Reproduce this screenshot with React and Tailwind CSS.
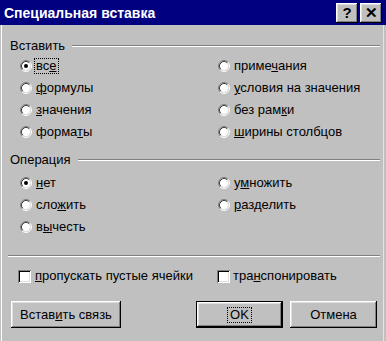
import React from "react";

const btn3d =
  "bg-[#c0c0c0] shadow-[inset_-1px_-1px_0_#000,inset_1px_1px_0_#fff,inset_-2px_-2px_0_#808080,inset_2px_2px_0_#dfdfdf]";

function Radio({ checked }) {
  return (
    <svg width="12" height="12" viewBox="0 0 12 12" className="shrink-0">
      <circle cx="6" cy="6" r="4.2" fill="#fff" />
      <path d="M2.11 9.89 A5.5 5.5 0 0 1 9.89 2.11" fill="none" stroke="#808080" />
      <path d="M9.89 2.11 A5.5 5.5 0 0 1 2.11 9.89" fill="none" stroke="#fff" />
      <path d="M2.82 9.18 A4.5 4.5 0 0 1 9.18 2.82" fill="none" stroke="#404040" />
      <path d="M9.18 2.82 A4.5 4.5 0 0 1 2.82 9.18" fill="none" stroke="#dfdfdf" />
      {checked && <circle cx="6" cy="6" r="2" fill="#000" />}
    </svg>
  );
}

function Check() {
  return (
    <span className="block w-[13px] h-[13px] shrink-0 bg-white shadow-[inset_1px_1px_0_#808080,inset_-1px_-1px_0_#fff,inset_2px_2px_0_#000,inset_-2px_-2px_0_#dfdfdf]" />
  );
}

function Opt({ checked, focus, children }) {
  return (
    <div className="flex h-[22px] items-center gap-[2px]">
      <Radio checked={checked} />
      <span
        className={
          focus
            ? "border border-dotted border-black px-px leading-[14px]"
            : "border border-transparent px-px leading-[14px]"
        }
      >
        {children}
      </span>
    </div>
  );
}

function Group({ title }) {
  return (
    <div className="flex items-center gap-[7px] pl-[8px] pr-[3px] h-[14px]">
      <span className="leading-[14px]">{title}</span>
      <div className="flex-1 border-t border-t-[#808080] border-b border-b-white" />
    </div>
  );
}

export default function App() {
  return (
    <div
      className="w-[386px] h-[341px] bg-[#c0c0c0] flex flex-col overflow-hidden text-[13px] text-black"
      style={{ fontFamily: '"Liberation Sans", Arial, sans-serif' }}
    >
      {/* title bar */}
      <div className="h-[25px] bg-[#000080] flex items-center justify-between pl-[4px] pr-[4px] shrink-0">
        <span className="text-white font-bold text-[14px] leading-none">
          Специальная вставка
        </span>
        <div className="flex gap-[2px]">
          <div className={`${btn3d} w-[22px] h-[20px] flex items-center justify-center font-bold text-[15px] leading-none`}>
            ?
          </div>
          <div className={`${btn3d} w-[22px] h-[20px] flex items-center justify-center font-bold text-[15px] leading-none`}>
            ✕
          </div>
        </div>
      </div>

      <div className="flex-1 flex flex-col border-l border-l-white border-r border-r-[#e4e4e4] ml-px mr-[2px] pt-[14px]">
        <Group title="Вставить" />
        <div className="grid grid-cols-[198px_1fr] pl-[18px] mt-[2px]">
          <div className="flex flex-col">
            <Opt checked focus>
              вс<u>е</u>
            </Opt>
            <Opt>
              <u>ф</u>ормулы
            </Opt>
            <Opt>
              <u>з</u>начения
            </Opt>
            <Opt>
              форма<u>т</u>ы
            </Opt>
          </div>
          <div className="flex flex-col">
            <Opt>
              приме<u>ч</u>ания
            </Opt>
            <Opt>
              <u>у</u>словия на значения
            </Opt>
            <Opt>
              без рам<u>к</u>и
            </Opt>
            <Opt>
              <u>ш</u>ирины столбцов
            </Opt>
          </div>
        </div>

        <div className="mt-[10px]">
          <Group title="Операция" />
        </div>
        <div className="grid grid-cols-[198px_1fr] pl-[18px] mt-[5px]">
          <div className="flex flex-col">
            <Opt checked>
              <u>н</u>ет
            </Opt>
            <Opt>
              сло<u>ж</u>ить
            </Opt>
            <Opt>
              в<u>ы</u>честь
            </Opt>
          </div>
          <div className="flex flex-col">
            <Opt>
              у<u>м</u>ножить
            </Opt>
            <Opt>
              <u>р</u>азделить
            </Opt>
          </div>
        </div>

        <div className="mt-[17px] mx-[6px] mr-[3px] border-t border-t-[#808080] border-b border-b-white" />

        <div className="grid grid-cols-[199px_1fr] pl-[16px] mt-[9px] h-[20px] items-center">
          <div className="flex items-center gap-[4px]">
            <Check />
            <span>
              <u>п</u>ропускать пустые ячейки
            </span>
          </div>
          <div className="flex items-center gap-[3px]">
            <Check />
            <span>
              тра<u>н</u>спонировать
            </span>
          </div>
        </div>

        <div className="flex items-center mt-[15px] pl-[9px]">
          <div className={`${btn3d} w-[110px] h-[27px] flex items-center justify-center`}>
            Встав<u>и</u>ть связь
          </div>
          <div className="ml-[75px] w-[87px] h-[27px] border border-black flex">
            <div className={`${btn3d} flex-1 flex items-center justify-center`}>
              <span className="border border-dotted border-black px-[2px] leading-[14px]">OK</span>
            </div>
          </div>
          <div className={`${btn3d} ml-[7px] w-[87px] h-[27px] flex items-center justify-center`}>
            Отмена
          </div>
        </div>
      </div>
    </div>
  );
}
